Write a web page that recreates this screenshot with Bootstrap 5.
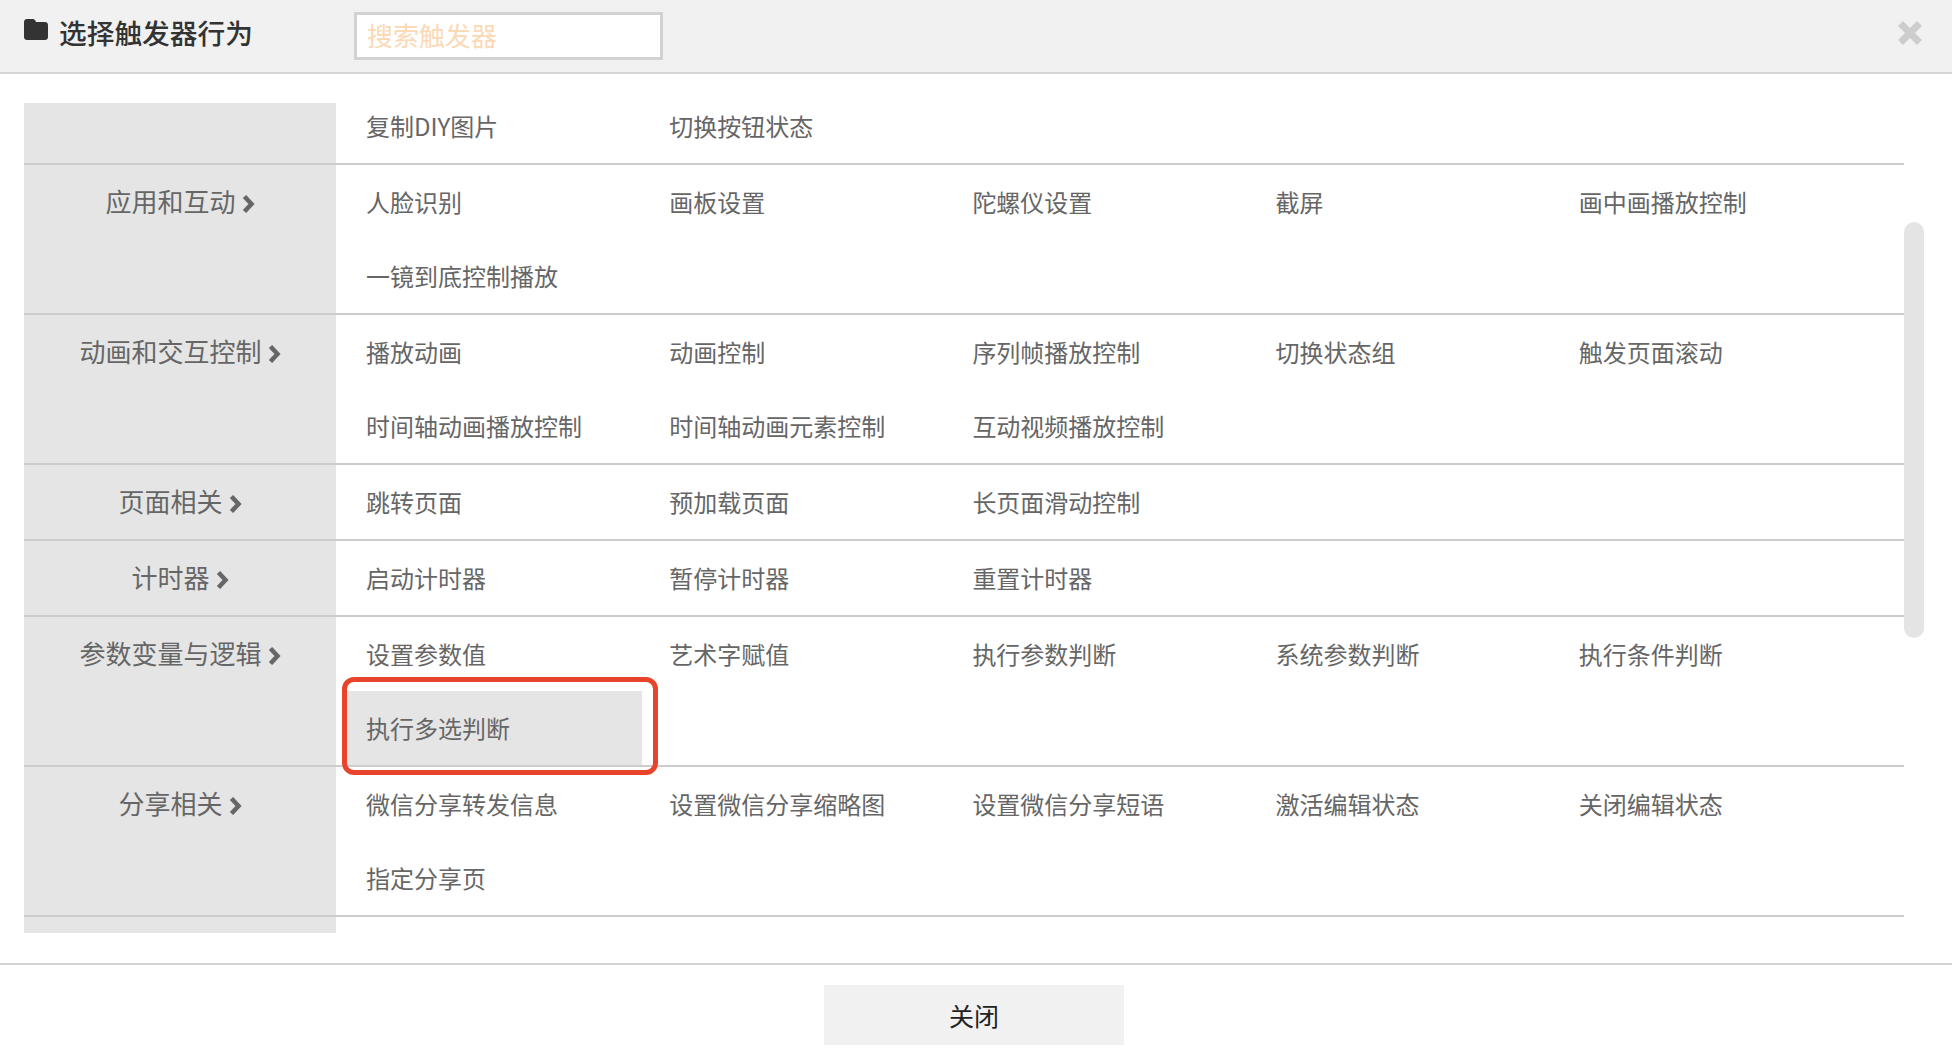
<!DOCTYPE html>
<html lang="zh-CN">
<head>
    <meta charset="UTF-8">
    <title>选择触发器行为</title>
    <link href="https://cdn.jsdelivr.net/npm/bootstrap@5.3.0/dist/css/bootstrap.min.css" rel="stylesheet">
    <style>
        body {
            height: 1060px;
            overflow: hidden;
            font-family: "Noto Sans CJK SC", "Liberation Sans", sans-serif;
            color: #666;
        }
        .trig-head {
            height: 74px;
            padding-left: 24px;
            background: #f1f1f1;
            border-bottom: 2px solid #d4d4d4;
        }
        .trig-folder { margin-bottom: 14px; }
        .trig-title {
            width: 306px;
            margin: 0 0 6px;
            padding-left: 11px;
            font-size: 27.7px;
            font-weight: 500;
            color: #333;
        }
        .trig-search {
            width: 309px;
            height: 48px;
            margin-bottom: 1px;
            padding: 0 10px 2px;
            font-size: 26px;
            border: 3px solid #d2d2d2;
            border-radius: 0;
        }
        .trig-search::placeholder { color: #fbd9b5; }
        .trig-close {
            top: 21px;
            right: 30px;
            line-height: 0;
        }
        .trig-body {
            position: relative;
            height: 830px;
            margin: 29px 0 30px 24px;
            overflow: hidden;
        }
        .trig-list {
            width: 1880px;
            margin-top: -14px;
        }
        .trig-row {
            border-bottom: 2px solid #ccc;
        }
        .trig-side {
            flex: 0 0 312px;
            min-height: 74px;
            line-height: 72px;
            font-size: 26px;
            text-align: center;
            background: #e5e5e5;
        }
        .trig-side svg { margin-left: 6px; vertical-align: -1px; }
        .trig-items { padding-left: 10px; }
        .trig-item {
            position: relative;
            width: 296px;
            height: 74px;
            margin-right: 7.2px;
            padding-left: 20px;
            font-size: 24px;
            line-height: 73px;
        }
        .trig-item-on { background: #e5e5e5; }
        .trig-mark {
            position: absolute;
            top: -14px;
            left: -4px;
            right: -16px;
            bottom: -10px;
            border: 5px solid #e8432b;
            border-radius: 12px;
        }
        .trig-thumb {
            position: absolute;
            top: 119px;
            right: 28px;
            width: 20px;
            height: 416px;
            background: #e4e4e4;
            border-radius: 10px;
        }
        .trig-foot {
            height: 95px;
            padding: 20px 4px 0 0;
            border-top: 2px solid #d4d4d4;
        }
        .trig-btn {
            width: 300px;
            height: 60px;
            padding: 2px 0 0;
            font-size: 25px;
            color: #222;
            background: #f1f1f1;
            border: 0;
            border-radius: 0;
        }
    </style>
</head>
<body>
    <div class="trig-head d-flex align-items-center position-relative">
        <svg class="trig-folder" width="24" height="21" viewBox="0 0 24 21"><path fill="#333" d="M3 0h6c1.500 0 2 1 2.500 2L12 3h9c1.700 0 3 1.300 3 3v12c0 1.700-1.300 3-3 3H3c-1.700 0-3-1.300-3-3V3c0-1.700 1.300-3 3-3z"/></svg>
        <h5 class="trig-title">选择触发器行为</h5>
        <input class="form-control trig-search" type="text" placeholder="搜索触发器">
        <div class="trig-close position-absolute">
            <svg width="24" height="24" viewBox="0 0 24 24"><path stroke="#cdcdcd" stroke-width="7" d="M2.500 2.500l19 19M21.500 2.500l-19 19"/></svg>
        </div>
    </div>

    <div class="trig-body">
        <div class="trig-list">
            <div class="trig-row d-flex">
                <div class="trig-side"></div>
                <div class="trig-items d-flex flex-wrap flex-grow-1">
                    <div class="trig-item">复制DIY图片</div>
                    <div class="trig-item">切换按钮状态</div>
                </div>
            </div>
            <div class="trig-row d-flex">
                <div class="trig-side">应用和互动<svg width="13" height="18" viewBox="0 0 13 18"><path fill="none" stroke="#666" stroke-width="4.500" d="M2.500 1.500L9.500 9l-7 7.500"/></svg></div>
                <div class="trig-items d-flex flex-wrap flex-grow-1">
                    <div class="trig-item">人脸识别</div>
                    <div class="trig-item">画板设置</div>
                    <div class="trig-item">陀螺仪设置</div>
                    <div class="trig-item">截屏</div>
                    <div class="trig-item">画中画播放控制</div>
                    <div class="trig-item">一镜到底控制播放</div>
                </div>
            </div>
            <div class="trig-row d-flex">
                <div class="trig-side">动画和交互控制<svg width="13" height="18" viewBox="0 0 13 18"><path fill="none" stroke="#666" stroke-width="4.500" d="M2.500 1.500L9.500 9l-7 7.500"/></svg></div>
                <div class="trig-items d-flex flex-wrap flex-grow-1">
                    <div class="trig-item">播放动画</div>
                    <div class="trig-item">动画控制</div>
                    <div class="trig-item">序列帧播放控制</div>
                    <div class="trig-item">切换状态组</div>
                    <div class="trig-item">触发页面滚动</div>
                    <div class="trig-item">时间轴动画播放控制</div>
                    <div class="trig-item">时间轴动画元素控制</div>
                    <div class="trig-item">互动视频播放控制</div>
                </div>
            </div>
            <div class="trig-row d-flex">
                <div class="trig-side">页面相关<svg width="13" height="18" viewBox="0 0 13 18"><path fill="none" stroke="#666" stroke-width="4.500" d="M2.500 1.500L9.500 9l-7 7.500"/></svg></div>
                <div class="trig-items d-flex flex-wrap flex-grow-1">
                    <div class="trig-item">跳转页面</div>
                    <div class="trig-item">预加载页面</div>
                    <div class="trig-item">长页面滑动控制</div>
                </div>
            </div>
            <div class="trig-row d-flex">
                <div class="trig-side">计时器<svg width="13" height="18" viewBox="0 0 13 18"><path fill="none" stroke="#666" stroke-width="4.500" d="M2.500 1.500L9.500 9l-7 7.500"/></svg></div>
                <div class="trig-items d-flex flex-wrap flex-grow-1">
                    <div class="trig-item">启动计时器</div>
                    <div class="trig-item">暂停计时器</div>
                    <div class="trig-item">重置计时器</div>
                </div>
            </div>
            <div class="trig-row d-flex">
                <div class="trig-side">参数变量与逻辑<svg width="13" height="18" viewBox="0 0 13 18"><path fill="none" stroke="#666" stroke-width="4.500" d="M2.500 1.500L9.500 9l-7 7.500"/></svg></div>
                <div class="trig-items d-flex flex-wrap flex-grow-1">
                    <div class="trig-item">设置参数值</div>
                    <div class="trig-item">艺术字赋值</div>
                    <div class="trig-item">执行参数判断</div>
                    <div class="trig-item">系统参数判断</div>
                    <div class="trig-item">执行条件判断</div>
                    <div class="trig-item trig-item-on">执行多选判断<div class="trig-mark"></div></div>
                </div>
            </div>
            <div class="trig-row d-flex">
                <div class="trig-side">分享相关<svg width="13" height="18" viewBox="0 0 13 18"><path fill="none" stroke="#666" stroke-width="4.500" d="M2.500 1.500L9.500 9l-7 7.500"/></svg></div>
                <div class="trig-items d-flex flex-wrap flex-grow-1">
                    <div class="trig-item">微信分享转发信息</div>
                    <div class="trig-item">设置微信分享缩略图</div>
                    <div class="trig-item">设置微信分享短语</div>
                    <div class="trig-item">激活编辑状态</div>
                    <div class="trig-item">关闭编辑状态</div>
                    <div class="trig-item">指定分享页</div>
                </div>
            </div>
            <div class="trig-row d-flex">
                <div class="trig-side"></div>
                <div class="trig-items d-flex flex-wrap flex-grow-1"></div>
            </div>
        </div>
        <div class="trig-thumb"></div>
    </div>

    <div class="trig-foot d-flex justify-content-center align-items-start">
        <button class="btn trig-btn" type="button">关闭</button>
    </div>

    <script src="https://cdn.jsdelivr.net/npm/bootstrap@5.3.0/dist/js/bootstrap.bundle.min.js"></script>
</body>
</html>
